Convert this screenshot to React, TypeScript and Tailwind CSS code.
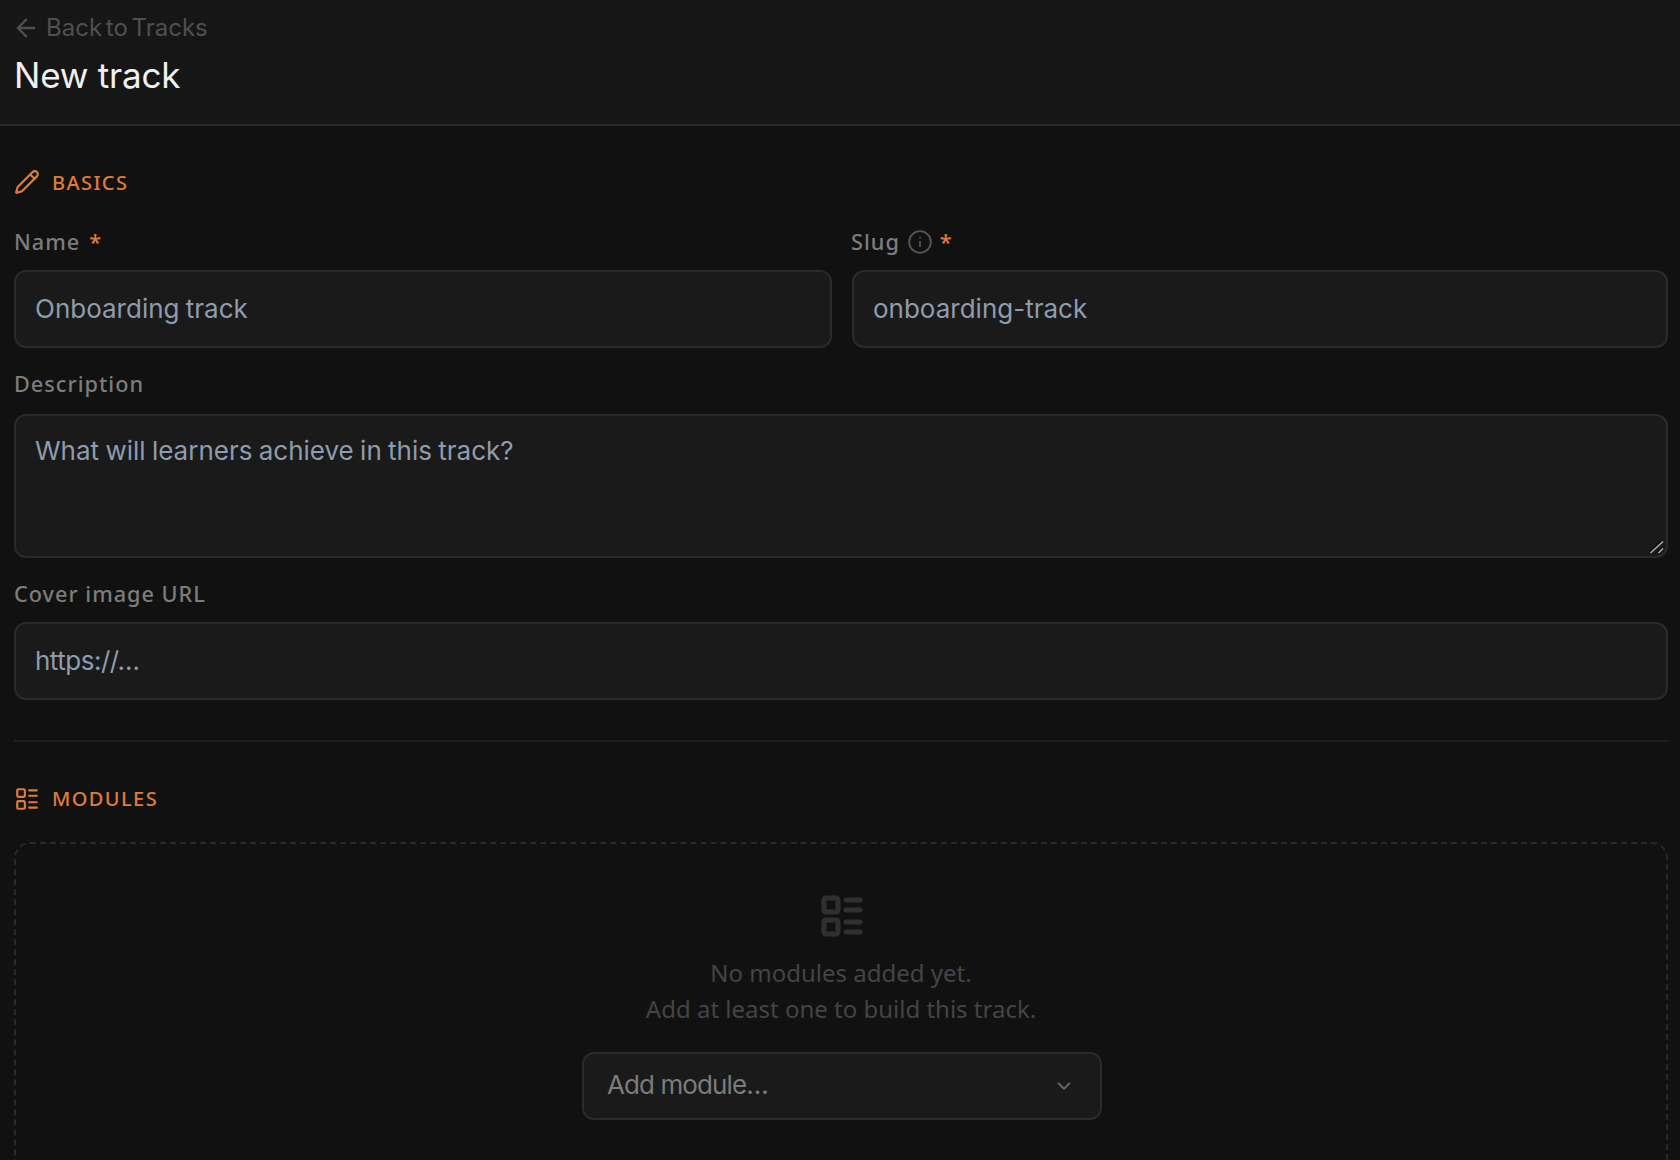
import { ArrowLeft, Pencil, LayoutList, Info, ChevronDown } from "lucide-react";

const inter = "[font-family:Inter,sans-serif]";

function Label({ children }: { children: React.ReactNode }) {
  return (
    <label className="flex items-center gap-[9px] h-[30px] text-[21.7px] font-medium tracking-[1px] text-[#7c7c7c] [font-family:'Noto_Sans',sans-serif]">
      {children}
    </label>
  );
}

const Star = () => <span className="text-[#e07b39]">*</span>;

const fieldCls =
  "w-full rounded-[12px] border-2 border-[#2a2a2a] bg-[#1a1a1a] pl-[19px] pr-[20px] text-[26px] [word-spacing:-1px] text-[#8e9cad] outline-none placeholder:text-[#8e9cad] [font-family:Inter,sans-serif]";

function SectionHead({ icon, title }: { icon: React.ReactNode; title: string }) {
  return (
    <div className="flex items-center gap-[12px] text-[#e07b39]">
      {icon}
      <h2 className="text-[20px] font-medium tracking-[1.4px] uppercase [font-family:'Noto_Sans',sans-serif]">{title}</h2>
    </div>
  );
}

export default function App() {
  return (
    <div className="h-[1160px] overflow-hidden bg-[#111111]">
      <header className={`h-[126px] border-b-2 border-[#2a2a2a] bg-[#161616] px-[14px] pt-[11px] ${inter}`}>
        <a className="flex h-[34px] items-center gap-[6px] text-[24px] [word-spacing:-3px] text-[#4f4f4f]">
          <ArrowLeft size={28} strokeWidth={2} className="-ml-[2px]" />
          Back to Tracks
        </a>
        <h1 className="mt-[8px] text-[35px] leading-[44px] font-normal tracking-[-0.2px] text-[#f0f0f0]">New track</h1>
      </header>

      <main className="pl-[14px] pr-[12px] pt-[42px]">
        <SectionHead icon={<Pencil size={26} strokeWidth={2} className="-mt-[2px]" />} title="Basics" />
        <div className="mt-[29px] grid grid-cols-[818px_1fr] gap-[20px]">
          <div>
            <Label>Name <Star /></Label>
            <input readOnly placeholder="Onboarding track" className={`mt-[13px] h-[78px] pb-[2px] ${fieldCls}`} />
          </div>
          <div>
            <Label>
              <span className="-ml-[1px]">Slug</span>
              <Info size={26} strokeWidth={1.75} className="-mx-[2px] text-[#555555]" />
              <Star />
            </Label>
            <input readOnly placeholder="onboarding-track" className={`mt-[13px] h-[78px] pb-[2px] ${fieldCls}`} />
          </div>
        </div>
        <div className="mt-[21px]">
          <Label>Description</Label>
          <div className="relative mt-[15px]">
            <textarea
              readOnly
              placeholder="What will learners achieve in this track?"
              className={`block h-[144px] resize-none py-[17px] leading-[36px] ${fieldCls}`}
            />
            <svg width="16" height="14" viewBox="0 0 16 14" className="absolute right-[3px] bottom-[4px]">
              <path d="M1 12.5 13 1M9 12.5 13 8.5" stroke="#0c0c0c" strokeWidth="3" fill="none" />
              <path d="M1.5 13 14 1.5M9.5 13 14 8.5" stroke="#b0b0b0" strokeWidth="1.5" fill="none" />
            </svg>
          </div>
        </div>
        <div className="mt-[21px]">
          <Label>Cover image URL</Label>
          <input readOnly placeholder="https://…" className={`mt-[13px] h-[78px] pb-[2px] tracking-[-0.5px] ${fieldCls}`} />
        </div>
        <div className="mt-[40px] border-t-2 border-[#1f1f1f]" />
        <div className="mt-[42px]">
          <SectionHead icon={<LayoutList size={26} strokeWidth={2} />} title="Modules" />
        </div>
        <div className="mt-[28px] flex h-[400px] flex-col items-center rounded-[16px] border-2 border-dashed border-[#2a2a2a] pt-[48px]">
          <LayoutList size={48} strokeWidth={2.5} className="ml-[2px] text-[#303030]" />
          <p className="mt-[15px] text-center text-[24px] leading-[36px] text-[#444444] [font-family:'Noto_Sans',sans-serif]">
            No modules added yet.
            <br />
            Add at least one to build this track.
          </p>
          <button className={`ml-[2px] mt-[25px] flex h-[68px] w-[520px] items-center justify-between rounded-[12px] border-2 border-[#2a2a2a] bg-[#1a1a1a] pl-[23px] pr-[25px] text-[26px] text-[#7c7c7c] ${inter}`}>
            <span className="-mt-[3px] tracking-[-0.9px]">Add module…</span>
            <ChevronDown size={22} className="text-[#666666]" />
          </button>
        </div>
      </main>
    </div>
  );
}
